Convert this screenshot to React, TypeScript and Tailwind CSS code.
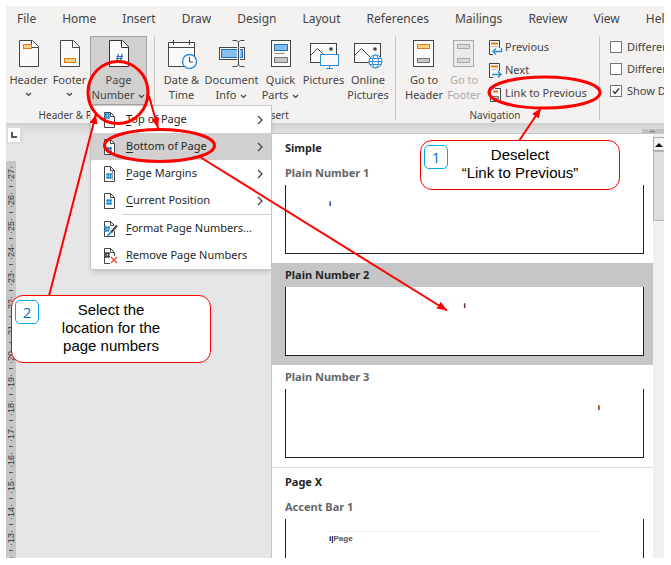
import { useState } from 'react';
import type { ReactNode } from 'react';

const tabs = ['File', 'Home', 'Insert', 'Draw', 'Design', 'Layout', 'References', 'Mailings', 'Review', 'View', 'Help'];

const rulerMarks = [27, 26, 25, 24, 23, 22, 21, 20, 19, 18, 17, 16, 15, 14, 13, 12];

function Chevron() {
  return (
    <svg width="7" height="5" viewBox="0 0 7 5" fill="none" stroke="#444" strokeWidth="1.2" className="inline-block">
      <path d="M1 1l2.5 2.5L6 1" />
    </svg>
  );
}

function HeaderIcon() {
  return (
    <svg width="28" height="28" fill="none" stroke="#444">
      <path d="M4.500 .5h13l6 6v20h-19z" fill="#fafafa" />
      <path d="M16.500 .5v7h7" />
      <rect x="8.500" y="4.500" width="8" height="4" fill="#fcd27e" stroke="#e07b1a" />
    </svg>
  );
}

function FooterIcon() {
  return (
    <svg width="28" height="28" fill="none" stroke="#444">
      <path d="M4.500 .5h13l6 6v20h-19z" fill="#fafafa" />
      <path d="M16.500 .5v7h7" />
      <rect x="8.500" y="18.500" width="11" height="4" fill="#fcd27e" stroke="#e07b1a" />
    </svg>
  );
}

function PageNumberIcon() {
  return (
    <svg width="28" height="28" fill="none" stroke="#333">
      <path d="M4.500 .5h13l6 6v20h-19z" fill="#fafafa" />
      <path d="M16.500 .5v7h7" />
      <path d="M13.500 14l-1.500 7M17 14l-1.500 7M11.500 16.500h6.500M11 18.500h6.500" stroke="#2f6fc0" strokeWidth="1.200" />
    </svg>
  );
}

function DateIcon() {
  return (
    <svg width="30" height="29" fill="none" stroke="#444">
      <path d="M1.500 2.500h26v24h-26z" fill="#fafafa" />
      <path d="M1.500 7.500h26M6.500 0v5M22.500 0v5" />
      <circle cx="22.500" cy="21.500" r="7" fill="#fafafa" stroke="#2e8fd0" strokeWidth="1.400" />
      <path d="M22.500 17v5h3.500" />
    </svg>
  );
}

function DocInfoIcon() {
  return (
    <svg width="28" height="28" fill="none" stroke="#444">
      <rect x="1.500" y="7.500" width="25" height="12" fill="#fafafa" />
      <rect x="3.500" y="9.500" width="21" height="8" fill="#83beec" stroke="#1e6fb8" />
      <path d="M20.500 2v23" stroke="#f3f2f1" strokeWidth="3" />
      <path d="M20.500 2v23M14.500 .5h4l2 1.500 2-1.500h4M14.500 26.500h4l2-1.500 2 1.500h4" />
    </svg>
  );
}

function QuickPartsIcon() {
  return (
    <svg width="22" height="28" fill="none" stroke="#444">
      <rect x="1.500" y=".5" width="19" height="26" fill="#fafafa" />
      <rect x="4.500" y="4.500" width="13" height="6" fill="#83beec" stroke="#1e6fb8" />
      <path d="M4.500 13.500h10" stroke="#888" />
      <rect x="4.500" y="17.500" width="13" height="5" fill="#c8c6c4" stroke="#777" />
    </svg>
  );
}

function PicturesIcon() {
  return (
    <svg width="30" height="29" fill="none" stroke="#444">
      <rect x="1.500" y="3.500" width="26" height="19" fill="#fafafa" />
      <path d="M1.500 15.500l7-7 7 7" />
      <circle cx="22" cy="9" r="1.800" fill="#444" stroke="none" />
      <rect x="11.500" y="14.500" width="18" height="11" fill="#fafafa" stroke="#2e8fd0" />
      <path d="M20.500 25.500v3M17 28.500h7" stroke="#2e8fd0" />
    </svg>
  );
}

function OnlinePicturesIcon() {
  return (
    <svg width="30" height="29" fill="none" stroke="#444">
      <rect x="1.500" y="3.500" width="26" height="19" fill="#fafafa" />
      <path d="M1.500 15.500l7-7 10 10" />
      <circle cx="22" cy="9" r="1.800" fill="#444" stroke="none" />
      <g stroke="#2e8fd0">
        <circle cx="22.500" cy="21.500" r="6.500" fill="#fafafa" />
        <ellipse cx="22.500" cy="21.500" rx="3" ry="6.500" />
        <path d="M16 21.500h13M17 18.500h11M17 24.500h11" />
      </g>
    </svg>
  );
}

function GoToHeaderIcon() {
  return (
    <svg width="22" height="28" fill="none" stroke="#444">
      <rect x=".5" y=".5" width="20" height="26" fill="#fafafa" />
      <rect x="4.500" y="4.500" width="12" height="4" fill="#fcd27e" stroke="#e07b1a" />
      <rect x="4.500" y="18.500" width="12" height="4" fill="#c8c6c4" stroke="#777" />
    </svg>
  );
}

function GoToFooterIcon() {
  return (
    <svg width="22" height="28" fill="none" stroke="#aaa">
      <rect x=".5" y=".5" width="20" height="26" fill="#eaeaea" />
      <rect x="4.500" y="4.500" width="12" height="4" fill="#d8d8d8" />
      <rect x="4.500" y="18.500" width="12" height="4" fill="#d8d8d8" />
    </svg>
  );
}

function NavIcon({ kind }: { kind: 'previous' | 'next' | 'link' }) {
  return (
    <svg width="15" height="16" fill="none" stroke="#444" className="shrink-0">
      {kind === 'link' ? (
        <>
          <path d="M2.500 6v9.500h10V2.500H7" fill="#fafafa" />
          <path d="M5 5.500h5" stroke="#e07b1a" strokeWidth="2" />
          <rect x="4.500" y="10.500" width="6" height="2" fill="#c8c6c4" stroke="#777" />
          <path d="M1.500 6V2.500H6M4 .5l-2.500 2 2.500 2" stroke="#2e8fd0" strokeWidth="1.300" />
        </>
      ) : (
        <>
          <path d="M11.500 8V.5h-10v14H5" fill="#fafafa" />
          <path d="M3 3.500h7" stroke="#e07b1a" strokeWidth="2" />
          <path d="M3.500 6.500h6" stroke="#bbb" />
        </>
      )}
      {kind === 'previous' && <path d="M13.500 8v3.500H5M8 8.500l-3 3 3 3" stroke="#2e8fd0" strokeWidth="1.400" />}
      {kind === 'next' && <path d="M4 11.500h9M10 8.500l3 3-3 3" stroke="#2e8fd0" strokeWidth="1.400" />}
    </svg>
  );
}

function MenuPage({ children }: { children: ReactNode }) {
  return (
    <svg width="15" height="16" viewBox="0 0 15 16" fill="none" stroke="#444" className="shrink-0">
      <path d="M1.500 .5h6l4 4v11h-10z" fill="#fff" />
      <path d="M7.500 .5v4h4" />
      {children}
    </svg>
  );
}

const hash = 'M4 0v6M6.500 0v6M2 1.500h6M2 4.500h6';

const menuItems = [
  { label: 'Top of Page', sub: true, icon: <MenuPage><path d={hash} transform="translate(-1 1)" stroke="#2e8fd0" strokeWidth="1.500" /></MenuPage> },
  { label: 'Bottom of Page', sub: true, icon: <MenuPage><path d={hash} transform="translate(1 8)" stroke="#2f6fc0" strokeWidth="1.500" /></MenuPage> },
  {
    label: 'Page Margins',
    sub: true,
    icon: (
      <MenuPage>
        <path d={hash} transform="translate(1 7)" stroke="#2e8fd0" strokeWidth="1.500" />
        <path d="M9.500 5v9" stroke="#999" />
      </MenuPage>
    ),
  },
  { label: 'Current Position', sub: true, icon: <MenuPage><path d={hash} transform="translate(1 6)" stroke="#2e8fd0" strokeWidth="1.500" /></MenuPage> },
  {
    label: 'Format Page Numbers...',
    sub: false,
    icon: (
      <MenuPage>
        <path d={hash} transform="translate(-1 5)" stroke="#2e8fd0" strokeWidth="1.500" />
        <path d="M14 4l-7 8" stroke="#fff" strokeWidth="4" />
        <path d="M14 4.500L8 11.500" strokeWidth="2" />
        <path d="M4 14.500c2 0 2-2.500 4-2.500" stroke="#2e8fd0" strokeWidth="2" />
      </MenuPage>
    ),
  },
  {
    label: 'Remove Page Numbers',
    sub: false,
    icon: (
      <MenuPage>
        <path d={hash} transform="translate(-1 4)" strokeWidth="1.500" />
        <path d="M7 8h8v8H7z" fill="#fff" stroke="none" />
        <path d="M8 9l6 6M14 9l-6 6" stroke="#e8463c" strokeWidth="1.400" />
      </MenuPage>
    ),
  },
];

const gallery = [
  { title: 'Simple', items: [
    { label: 'Plain Number 1', align: 'justify-start' },
    { label: 'Plain Number 2', align: 'justify-center' },
    { label: 'Plain Number 3', align: 'justify-end' },
  ] },
  { title: 'Page X', items: [{ label: 'Accent Bar 1', align: 'justify-start' }] },
];

function RibbonButton({ icon, lines, arrow, width, className = '' }: {
  icon: ReactNode;
  lines: string[];
  arrow?: boolean;
  width: string;
  className?: string;
}) {
  const last = lines.length - 1;
  return (
    <button className={`flex h-[69px] shrink-0 flex-col items-center border pt-[3px] leading-[15px] whitespace-nowrap ${width} ${className || 'border-transparent'}`}>
      <span className="flex h-8 items-start">{icon}</span>
      {lines.map((line, i) => (
        <span key={line}>
          {line}
          {arrow && i === last && lines.length > 1 && <span className="ml-1 inline-flex align-middle"><Chevron /></span>}
        </span>
      ))}
      {arrow && lines.length === 1 && <span className="flex h-[15px] items-center"><Chevron /></span>}
    </button>
  );
}

function Group({ label, children, className = '' }: { label: string; children: ReactNode; className?: string }) {
  return (
    <section className={`flex h-[84px] shrink-0 flex-col justify-between border-r border-[#c8c6c4] ${className}`}>
      <div className="flex">{children}</div>
      <h2 className="text-center text-[10px] leading-[10px]">{label}</h2>
    </section>
  );
}

function PageNumberMenu({ selected, onSelect }: { selected: string; onSelect: (label: string) => void }) {
  return (
    <ul role="menu" className="absolute top-full left-0 z-10 w-[182px] border border-[#c6c6c6] bg-white text-[#262626] shadow-md">
      {menuItems.map(item => (
        <li key={item.label} role="none">
          {item.label.startsWith('Format') && <div className="ml-[31px] border-t border-[#d2d0ce]" />}
          <button
            role="menuitem"
            onClick={() => onSelect(item.label)}
            className={`flex h-[27px] w-full items-center gap-2 pr-2 pl-3 text-left whitespace-nowrap ${selected === item.label ? 'bg-[#d2d0ce]' : ''}`}
          >
            {item.icon}
            <span className="grow">
              <u className="underline-offset-2">{item.label[0]}</u>
              {item.label.slice(1)}
            </span>
            {item.sub && (
              <svg width="6" height="10" fill="none" stroke="#444" strokeWidth="1.300">
                <path d="M1 1l4 4-4 4" />
              </svg>
            )}
          </button>
        </li>
      ))}
    </ul>
  );
}

function Gallery() {
  const [active, setActive] = useState('Plain Number 2');

  return (
    <div className="absolute top-[127px] right-0 bottom-0 left-[265px] z-20 flex overflow-hidden border-t border-l border-[#c6c6c6] bg-white">
      <div className="grow">
        {gallery.map((section, i) => (
          <section key={section.title} className={i > 0 ? 'border-t border-[#e1dfdd]' : ''}>
            <h3 className="flex h-[27px] items-center px-[13px] pt-px font-bold text-[#262626]">{section.title}</h3>
            {section.items.map(item => (
              <button
                key={item.label}
                onClick={() => setActive(item.label)}
                className={`block w-full px-[13px] pt-0.5 pb-[9px] text-left font-bold ${active === item.label ? 'bg-[#c6c6c6] text-[#262626]' : 'text-[#666]'}`}
              >
                <span className="flex h-5 items-center">{item.label}</span>
                <span className={`mt-0.5 mr-[-4px] flex h-[69px] border-x border-b border-[#222] bg-white px-[43px] pt-3 font-['Liberation_Sans',sans-serif] text-[8px] leading-[14px] text-black ${item.align}`}>
                  {item.label === 'Accent Bar 1'
                    ? <span className="h-3 w-full border-t border-[#eee]">i|<span className="text-[#555]">Page</span></span>
                    : 'i'}
                </span>
              </button>
            ))}
          </section>
        ))}
      </div>
      <div className="w-[11px] shrink-0 overflow-hidden bg-[#f0f0f0] pt-[3px]">
        <div className="flex h-[14px] w-3 items-center justify-center border border-[#aaa] bg-[#f3f3f3]">
          <svg width="8" height="5"><path d="M0 5l4-4 4 4z" fill="#111" /></svg>
        </div>
        <div className="h-[70px] w-3 border border-[#b5b5b5] bg-[#dedede]" />
      </div>
    </div>
  );
}

function Callout({ step, children, className }: { step: number; children: ReactNode; className: string }) {
  return (
    <div className={`absolute z-40 w-[200px] rounded-xl border border-[#f00] bg-white pt-[5px] pb-[7px] font-['Liberation_Sans',Arial,sans-serif] text-[15px] leading-[18px] text-black ${className}`}>
      <span className="absolute top-1 left-[3px] flex h-6 w-6 items-center justify-center rounded-[5px] border border-[#00a8ec] font-['Open_Sans',sans-serif] text-[#0070c0]">{step}</span>
      <p className="text-center">{children}</p>
    </div>
  );
}

function Arrows() {
  return (
    <svg className="pointer-events-none absolute inset-0 z-30 h-full w-full" fill="none" stroke="#f00" strokeWidth="2">
      <defs>
        <marker id="head" markerUnits="userSpaceOnUse" markerWidth="12" markerHeight="12" refX="10" refY="5" orient="auto">
          <path d="M0 1l10 4-10 4z" fill="#f00" stroke="none" />
        </marker>
      </defs>
      <ellipse cx="118" cy="92.500" rx="30" ry="31" strokeWidth="3" />
      <ellipse cx="159.500" cy="145.500" rx="55" ry="16" strokeWidth="3" />
      <ellipse cx="544.500" cy="92.500" rx="55.500" ry="15.500" strokeWidth="3" />
      <path d="M49 296L96 114" markerEnd="url(#head)" />
      <path d="M149 96l9 32" markerEnd="url(#head)" />
      <path d="M200 157l247 153.500" markerEnd="url(#head)" />
      <path d="M519 141l22-33" markerEnd="url(#head)" />
    </svg>
  );
}

export default function App() {
  const [selected, setSelected] = useState('Bottom of Page');

  return (
    <div className="relative h-screen overflow-hidden bg-white pt-1.5 pr-[7px] pb-[7px] pl-1.5 font-['Noto_Sans',sans-serif] text-[11px] text-[#444]">
      <div className="relative flex h-full flex-col overflow-hidden bg-[#e6e6e6]">
        <header className="h-[118px] shrink-0 border-b border-[#d2d0ce] bg-[#f3f2f1]">
          <nav className="flex h-[30px] gap-[26px] pt-1 pl-[11px] text-[12px] leading-[18px]">
            {tabs.map(tab => <button key={tab} className="shrink-0 self-start">{tab}</button>)}
          </nav>
          <div className="flex">
            <Group label="Header & Footer" className="pr-[7px] pl-0.5">
              <RibbonButton icon={<HeaderIcon />} lines={['Header']} arrow width="w-[41px]" />
              <RibbonButton icon={<FooterIcon />} lines={['Footer']} arrow width="w-[41px]" />
              <div className="relative">
                <RibbonButton icon={<PageNumberIcon />} lines={['Page', 'Number']} arrow width="w-[57px]" className="border-[#a6a4a2] bg-[#d2d0ce]" />
                <PageNumberMenu selected={selected} onSelect={setSelected} />
              </div>
            </Group>
            <Group label="Insert" className="px-1">
              <RibbonButton icon={<DateIcon />} lines={['Date &', 'Time']} width="w-[45px]" />
              <RibbonButton icon={<DocInfoIcon />} lines={['Document', 'Info']} arrow width="w-[55px]" />
              <RibbonButton icon={<QuickPartsIcon />} lines={['Quick', 'Parts']} arrow width="w-[43px]" />
              <RibbonButton icon={<PicturesIcon />} lines={['Pictures']} width="w-[43px]" />
              <RibbonButton icon={<OnlinePicturesIcon />} lines={['Online', 'Pictures']} width="w-[46px]" />
            </Group>
            <Group label="Navigation" className="pr-[13px] pl-2">
              <RibbonButton icon={<GoToHeaderIcon />} lines={['Go to', 'Header']} width="w-10" />
              <RibbonButton icon={<GoToFooterIcon />} lines={['Go to', 'Footer']} width="w-10" className="border-transparent text-[#aaa]" />
              <div className="ml-1 flex w-[98px] flex-col whitespace-nowrap">
                <button className="flex h-[23px] items-center gap-0.5"><NavIcon kind="previous" />Previous</button>
                <button className="flex h-[23px] items-center gap-0.5"><NavIcon kind="next" />Next</button>
                <button className="flex h-[23px] items-center gap-0.5"><NavIcon kind="link" />Link to Previous</button>
              </div>
            </Group>
            <div className="flex shrink-0 flex-col pl-[10px] whitespace-nowrap">
              {['Different First Page', 'Different Odd & Even Pages', 'Show Document Text'].map((label, i) => (
                <label key={label} className="flex h-[22px] items-center gap-[5px]">
                  <span className="relative flex h-3 w-3">
                    <input
                      type="checkbox"
                      defaultChecked={i === 2}
                      className="peer h-3 w-3 appearance-none border border-[#777] bg-white"
                    />
                    <svg viewBox="0 0 12 12" fill="none" stroke="#333" strokeWidth="1.400" className="pointer-events-none absolute inset-0 hidden peer-checked:block">
                      <path d="M3 6l2 2.500L9 3.500" />
                    </svg>
                  </span>
                  {label}
                </label>
              ))}
            </div>
          </div>
        </header>

        <div className="flex h-[37px] shrink-0 items-start justify-between bg-linear-to-b from-[#d2d2d2] to-[#e6e6e6] to-30%">
          <div className="mt-0.5 h-[18px] w-[17px] bg-[#dcdcdc] p-0.5">
            <div className="flex h-[14px] w-3 items-center justify-center bg-white">
              <svg width="6" height="6" fill="none" stroke="#555" strokeWidth="2"><path d="M1 0v5h5" /></svg>
            </div>
          </div>
          <div className="mt-[5px] flex h-1 w-[22px] justify-center bg-[#c0c0c0]">
            <svg width="6" height="4" fill="none" stroke="#555"><path d="M0 3.500C1 1.500 3 1.500 5 3.500" /></svg>
          </div>
        </div>

        <div className="flex min-h-0 grow">
          <ol className="w-[10px] shrink-0 overflow-hidden bg-[#c6c6c6] font-['Liberation_Sans',sans-serif] text-[9px] leading-[10px] text-[#333]">
            {rulerMarks.map(n => (
              <li key={n} className="flex h-[26px] flex-col items-center">
                <span className="flex h-[25px] rotate-180 items-center justify-center [writing-mode:vertical-rl]">·{n}·</span>
                <span className="h-px w-1 bg-[#555]" />
              </li>
            ))}
          </ol>
        </div>

        <Gallery />
      </div>

      <Arrows />
      <Callout step={1} className="top-[140px] left-[420px]">
        Deselect<br />“Link to Previous”
      </Callout>
      <Callout step={2} className="top-[295px] left-[11px]">
        Select the<br />location for the<br />page numbers
      </Callout>
    </div>
  );
}
